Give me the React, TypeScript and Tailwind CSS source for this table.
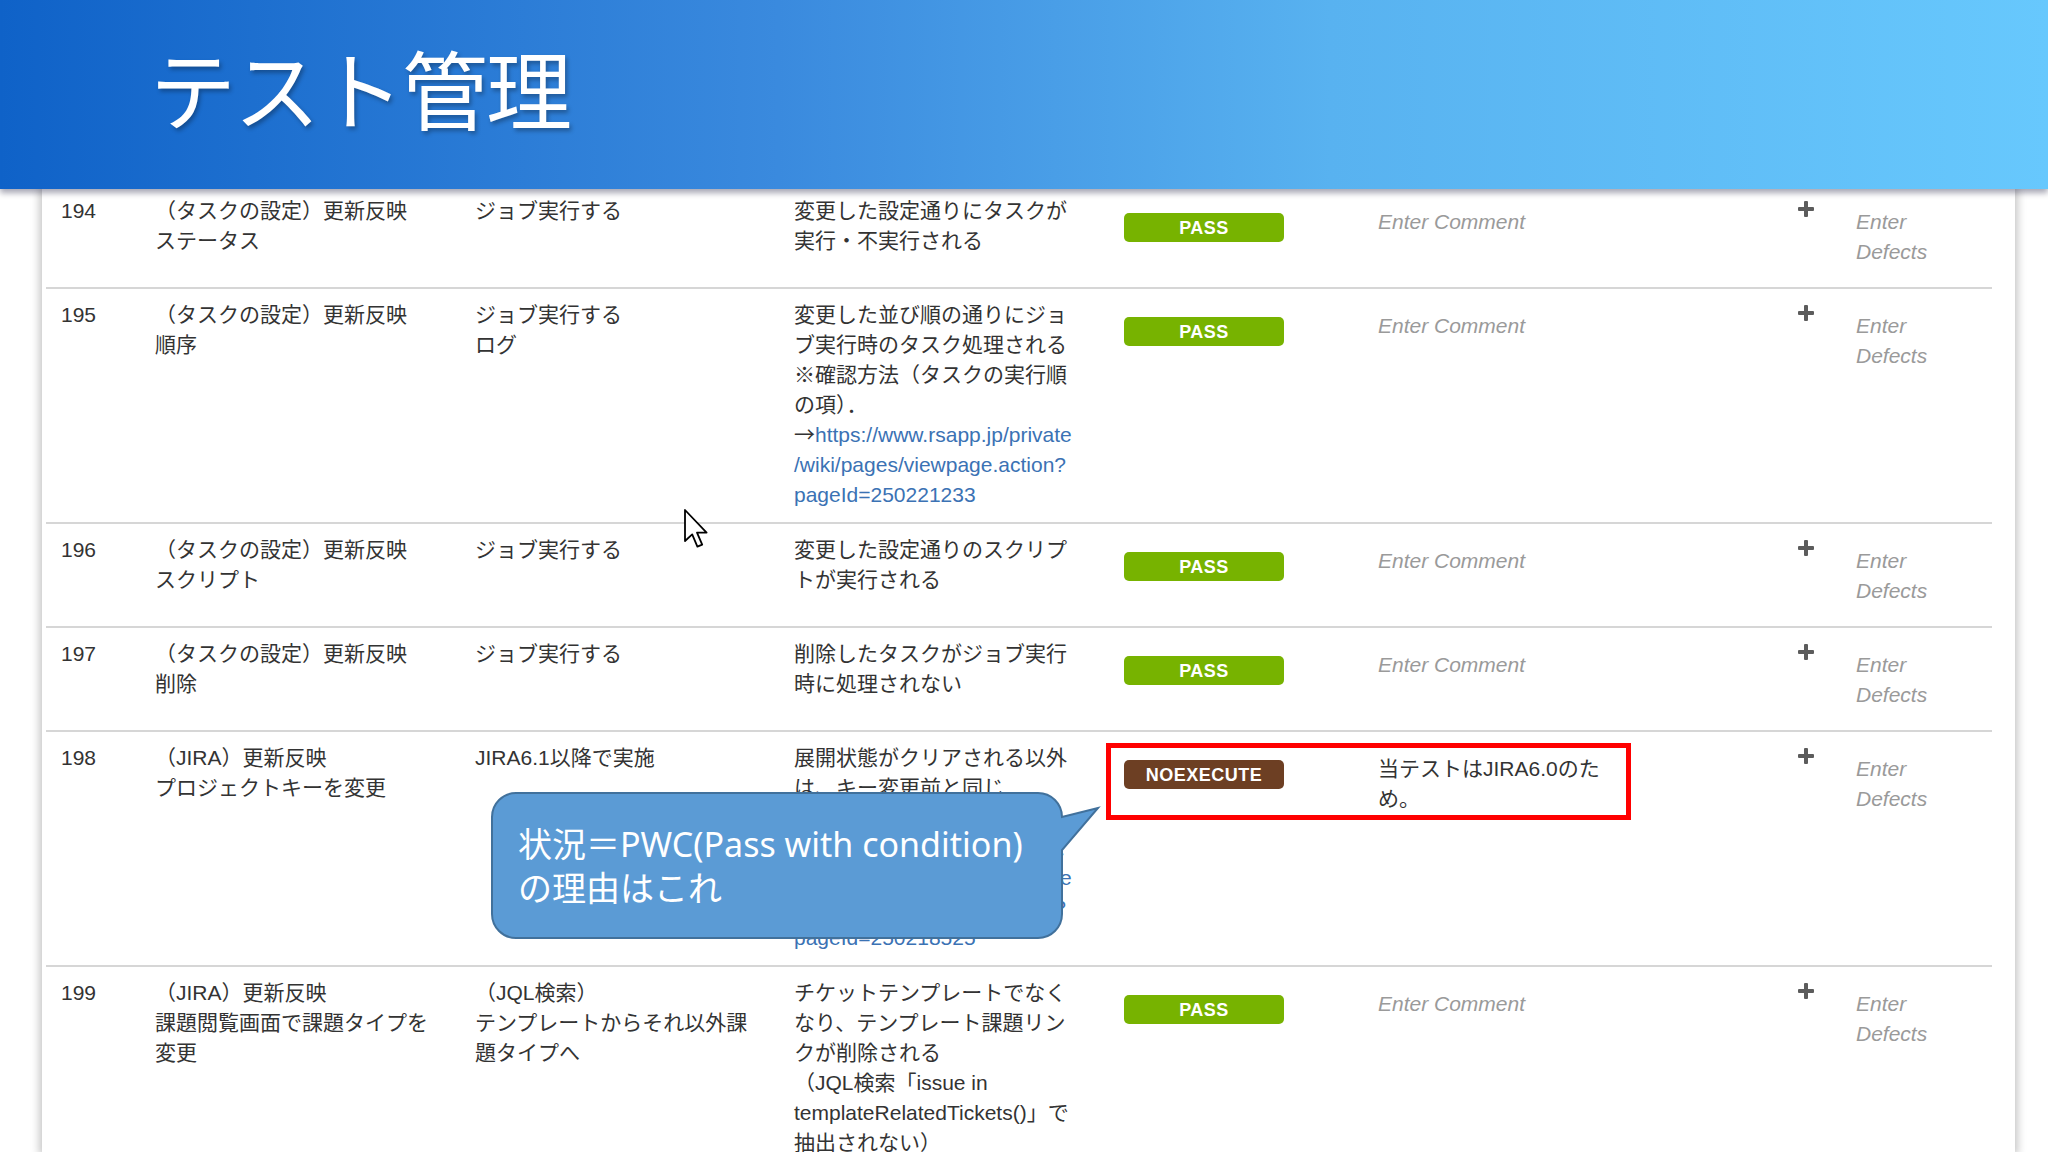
import React from "react";

type Line = { t: string; link?: boolean; pre?: string };
type Row = {
  id: string;
  summary: string[];
  steps: string[];
  expected: (string | Line)[];
  status: "PASS" | "NOEXECUTE";
  comment?: string[];
};

const rows: Row[] = [
  {
    id: "194",
    summary: ["（タスクの設定）更新反映", "ステータス"],
    steps: ["ジョブ実行する"],
    expected: ["変更した設定通りにタスクが", "実行・不実行される"],
    status: "PASS",
  },
  {
    id: "195",
    summary: ["（タスクの設定）更新反映", "順序"],
    steps: ["ジョブ実行する", "ログ"],
    expected: [
      "変更した並び順の通りにジョ",
      "ブ実行時のタスク処理される",
      "※確認方法（タスクの実行順",
      "の項）．",
      { pre: "→", t: "https://www.rsapp.jp/private", link: true },
      { t: "/wiki/pages/viewpage.action?", link: true },
      { t: "pageId=250221233", link: true },
    ],
    status: "PASS",
  },
  {
    id: "196",
    summary: ["（タスクの設定）更新反映", "スクリプト"],
    steps: ["ジョブ実行する"],
    expected: ["変更した設定通りのスクリプ", "トが実行される"],
    status: "PASS",
  },
  {
    id: "197",
    summary: ["（タスクの設定）更新反映", "削除"],
    steps: ["ジョブ実行する"],
    expected: ["削除したタスクがジョブ実行", "時に処理されない"],
    status: "PASS",
  },
  {
    id: "198",
    summary: ["（JIRA）更新反映", "プロジェクトキーを変更"],
    steps: ["JIRA6.1以降で実施"],
    expected: [
      "展開状態がクリアされる以外",
      "は、キー変更前と同じ",
      "状態が保持される",
      "※確認方法（展開状態の項）．",
      { pre: "→", t: "https://www.rsapp.jp/private", link: true },
      { t: "/wiki/pages/viewpage.action?", link: true },
      { t: "pageId=250218525", link: true },
    ],
    status: "NOEXECUTE",
    comment: ["当テストはJIRA6.0のた", "め。"],
  },
  {
    id: "199",
    summary: ["（JIRA）更新反映", "課題閲覧画面で課題タイプを", "変更"],
    steps: ["（JQL検索）", "テンプレートからそれ以外課", "題タイプへ"],
    expected: [
      "チケットテンプレートでなく",
      "なり、テンプレート課題リン",
      "クが削除される",
      "（JQL検索「issue in",
      "templateRelatedTickets()」で",
      "抽出されない）",
    ],
    status: "PASS",
  },
];

function Lines({ lines }: { lines: (string | Line)[] }) {
  return (
    <>
      {lines.map((l, i) =>
        typeof l === "string" ? (
          <div key={i} className="whitespace-nowrap h-[30px]">
            {l}
          </div>
        ) : (
          <div key={i} className="whitespace-nowrap h-[30px]">
            {l.pre && (
              <span
                className="leading-none"
                style={{ fontFamily: '"Noto Sans CJK JP", sans-serif' }}
              >
                {l.pre}
              </span>
            )}
            <span className={l.link ? "text-[#3b72b4]" : ""}>{l.t}</span>
          </div>
        )
      )}
    </>
  );
}

function Plus() {
  return (
    <svg width="16" height="16" viewBox="0 0 16 16">
      <rect x="6" y="0" width="4" height="16" rx="1" fill="#5c5c5c" />
      <rect x="0" y="6" width="16" height="4" rx="1" fill="#5c5c5c" />
    </svg>
  );
}

function Badge({ status }: { status: Row["status"] }) {
  const bg = status === "PASS" ? "bg-[#77b300]" : "bg-[#6d3f23]";
  return (
    <div
      className={`${bg} w-[160px] h-[29px] rounded-[5px] flex items-center justify-center text-white font-bold text-[18px] tracking-[0.5px]`}
      style={{ fontFamily: '"Liberation Sans", Arial, sans-serif' }}
    >
      {status}
    </div>
  );
}

function TableRow({ r }: { r: Row }) {
  return (
    <div className="grid grid-cols-[109px_320px_319px_330px_254px_420px_58px_136px] border-b-2 border-[#d6d6d6] items-start">
      <div className="pl-[15px] pt-[11px] pb-[12px]">{r.id}</div>
      <div className="pt-[11px] pb-[12px]">
        <Lines lines={r.summary} />
      </div>
      <div className="pt-[11px] pb-[12px]">
        <Lines lines={r.steps} />
      </div>
      <div className="pt-[11px] pb-[12px]">
        <Lines lines={r.expected} />
      </div>
      <div className="pt-[28px]">
        <Badge status={r.status} />
      </div>
      <div className="pt-[22px]">
        {r.comment ? (
          <Lines lines={r.comment} />
        ) : (
          <div className="italic text-[#9a9a9a]">Enter Comment</div>
        )}
      </div>
      <div className="pt-[16px]">
        <Plus />
      </div>
      <div className="pt-[22px] pb-[20px] italic text-[#9a9a9a]">
        <div>Enter</div>
        <div>Defects</div>
      </div>
    </div>
  );
}

export default function App() {
  return (
    <div
      className="relative w-[2048px] h-[1152px] overflow-hidden bg-white"
      style={{ fontFamily: '"Liberation Sans", "Noto Sans CJK JP", sans-serif' }}
    >
      <header className="relative z-10 h-[189px] bg-[linear-gradient(90deg,#0f62c8_0%,#3a8ade_38%,#58b2f0_65%,#67c8fd_100%)] shadow-[0_4px_6px_rgba(0,0,40,0.35)]">
        <h1
          className="pl-[150px] pt-[44px] text-[86px] leading-none tracking-[-2px] text-white [text-shadow:2px_3px_4px_rgba(0,0,0,0.3)]"
          style={{ fontFamily: '"Noto Sans CJK JP", sans-serif' }}
        >
          テスト管理
        </h1>
      </header>

      <main className="ml-[42px] w-[1973px] h-[963px] bg-white overflow-hidden shadow-[0_0_8px_3px_rgba(0,0,0,0.22)]">
        <div className="ml-[4px] w-[1946px] -mt-[4px] text-[21px] leading-[30px] text-[#333333]">
          {rows.map((r) => (
            <TableRow key={r.id} r={r} />
          ))}
        </div>
      </main>

      {/* red highlight box */}
      <div className="absolute left-[1106px] top-[743px] w-[525px] h-[77px] border-[5px] border-[#ff0000]" />

      {/* callout */}
      <svg
        className="absolute left-[490px] top-[791px]"
        width="612"
        height="150"
        viewBox="0 0 612 150"
      >
        <path
          d="M 26 2 H 548 A 24 24 0 0 1 572 26 L 608 17 L 572 59 V 123 A 24 24 0 0 1 548 147 H 26 A 24 24 0 0 1 2 123 V 26 A 24 24 0 0 1 26 2 Z"
          fill="#5b9bd5"
          stroke="#41719c"
          strokeWidth="2"
        />
      </svg>
      <div
        className="absolute left-[518px] top-[822px] text-white text-[34px] leading-[44px] whitespace-nowrap"
        style={{ fontFamily: '"Noto Sans", "Noto Sans CJK JP", sans-serif' }}
      >
        <div>状況＝PWC(Pass with condition)</div>
        <div>の理由はこれ</div>
      </div>

      {/* mouse cursor */}
      <svg
        className="absolute left-[683px] top-[508px]"
        width="26"
        height="42"
        viewBox="0 0 13 21"
      >
        <path
          d="M1 1 L1 16.5 L4.6 13.2 L7.2 19.3 L9.6 18.3 L7 12.3 L11.8 12.3 Z"
          fill="#ffffff"
          stroke="#000000"
          strokeWidth="0.9"
          strokeLinejoin="round"
        />
      </svg>
    </div>
  );
}
